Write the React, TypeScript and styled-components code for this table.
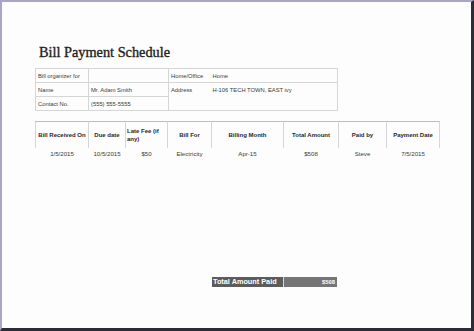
import React from "react";
import styled, { createGlobalStyle } from "styled-components";

const Global = createGlobalStyle`
  html, body { margin: 0; padding: 0; background: #fdfdfd; }
  * { box-sizing: border-box; }
`;

const Frame = styled.div`
  width: 474px;
  height: 331px;
  background: #fdfdfd;
  border-top: 2px solid #a9a5c6;
  border-left: 2px solid #a9a5c6;
  border-right: 3px solid #2c2b3a;
  border-bottom: 3px solid #2c2b3a;
  padding: 0 0 0 33px;
  font-family: "Liberation Sans", Arial, sans-serif;
  color: #333;
  overflow: hidden;
`;

const Title = styled.h1`
  margin: 0;
  padding-top: 41px;
  height: 66px;
  font-family: "Liberation Serif", "Times New Roman", serif;
  font-weight: normal;
  font-size: 14.3px;
  line-height: 18px;
  color: #1e1e1e;
  -webkit-text-stroke: 0.35px #1e1e1e;
  padding-left: 4px;
`;

const InfoTable = styled.table`
  border-collapse: collapse;
  table-layout: fixed;
  width: 302px;
  font-size: 5.8px;
  color: #3a3a3a;
`;

const InfoCell = styled.td<{ $noRight?: boolean; $noLeft?: boolean }>`
  border: 1px solid #d6d6d6;
  ${(p) => (p.$noRight ? "border-right: none;" : "")}
  ${(p) => (p.$noLeft ? "border-left: none;" : "")}
  height: 14px;
  padding: 0 0 0 2px;
  vertical-align: middle;
  white-space: nowrap;
  overflow: hidden;
`;

const InfoTall = styled(InfoCell)`
  vertical-align: top;
  padding-top: 4px;
`;

const Schedule = styled.table`
  margin-top: 10px;
  border-collapse: collapse;
  table-layout: fixed;
  width: 404px;
  color: #333;
`;

const HeadCell = styled.th<{ $left?: boolean }>`
  border-top: 1px solid #bdbdbd;
  border-left: 1px solid #d6d6d6;
  border-right: 1px solid #d6d6d6;
  height: 26px;
  padding: 0;
  font-size: 6px;
  font-weight: bold;
  line-height: 8px;
  text-align: ${(p) => (p.$left ? "left" : "center")};
  vertical-align: middle;
  color: #2a2a2a;
  white-space: ${(p) => (p.$left ? "normal" : "nowrap")};
  ${(p) => (p.$left ? "padding-left: 1px;" : "")}
`;

const DataCell = styled.td`
  height: 12px;
  padding: 0;
  font-size: 6.1px;
  text-align: center;
  vertical-align: middle;
  color: #3a3a3a;
`;

const TotalBar = styled.div`
  margin-top: 117px;
  margin-left: 177px;
  display: flex;
  width: 125px;
  height: 10px;
  font-size: 7.3px;
  font-weight: bold;
  color: #fff;
`;

const TotalLabel = styled.div`
  width: 72px;
  background: #5c5c5c;
  border-right: 1px solid #d8d8d8;
  padding-left: 1px;
  line-height: 10px;
  white-space: nowrap;
`;

const TotalValue = styled.div`
  flex: 1;
  background: #757575;
  text-align: right;
  padding-right: 2px;
  font-size: 5.8px;
  line-height: 10px;
`;

const cols = [53, 37, 42, 44, 72, 55, 48, 53];
const headers = [
  "Bill Received On",
  "Due date",
  "Late Fee (if any)",
  "Bill For",
  "Billing Month",
  "Total Amount",
  "Paid by",
  "Payment Date",
];
const row = ["1/5/2015", "10/5/2015", "$50", "Electricity", "Apr-15", "$508", "Steve", "7/5/2015"];

export default function App() {
  return (
    <>
      <Global />
      <Frame>
        <Title>Bill Payment Schedule</Title>
        <InfoTable>
          <colgroup>
            <col style={{ width: 53 }} />
            <col style={{ width: 80 }} />
            <col style={{ width: 42 }} />
            <col style={{ width: 127 }} />
          </colgroup>
          <tbody>
            <tr>
              <InfoCell>Bill organizer for</InfoCell>
              <InfoCell></InfoCell>
              <InfoCell $noRight>Home/Office</InfoCell>
              <InfoCell $noLeft>Home</InfoCell>
            </tr>
            <tr>
              <InfoCell>Name</InfoCell>
              <InfoCell>Mr. Adam Smith</InfoCell>
              <InfoTall $noRight rowSpan={2}>Address</InfoTall>
              <InfoTall $noLeft rowSpan={2}>H-106 TECH TOWN, EAST ivy</InfoTall>
            </tr>
            <tr>
              <InfoCell>Contact No.</InfoCell>
              <InfoCell>(555) 555-5555</InfoCell>
            </tr>
          </tbody>
        </InfoTable>
        <Schedule>
          <colgroup>
            {cols.map((w, i) => (
              <col key={i} style={{ width: w }} />
            ))}
          </colgroup>
          <thead>
            <tr>
              {headers.map((h, i) => (
                <HeadCell key={h} $left={i === 2}>
                  {h}
                </HeadCell>
              ))}
            </tr>
          </thead>
          <tbody>
            <tr>
              {row.map((v, i) => (
                <DataCell key={i}>{v}</DataCell>
              ))}
            </tr>
          </tbody>
        </Schedule>
        <TotalBar>
          <TotalLabel>Total Amount Paid</TotalLabel>
          <TotalValue>$508</TotalValue>
        </TotalBar>
      </Frame>
    </>
  );
}
